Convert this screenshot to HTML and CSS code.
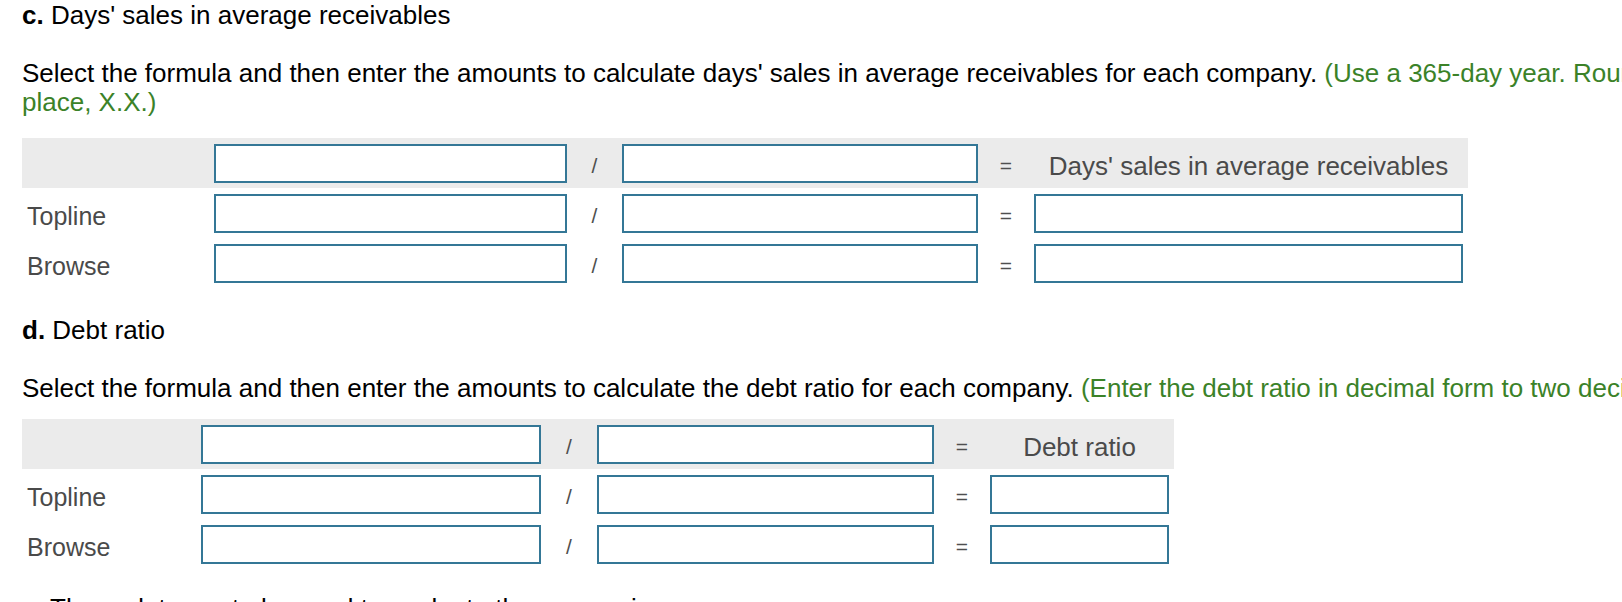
FILE: index.html
```html
<!DOCTYPE html>
<html lang="en">
<head>
<meta charset="utf-8">
<title>Ratios</title>
<link rel="stylesheet" href="styles.css">
</head>
<body>
<div class="page">
  <section class="part">
    <h3 class="part-title"><b>c.</b> Days' sales in average receivables</h3>
    <p class="prompt prompt-c">Select the formula and then enter the amounts to calculate days' sales in average receivables for each company. <span class="hint">(Use a 365-day year. Round your answers to one decimal<br>place, X.X.)</span></p>
    <div class="ratio-table t-days">
      <div class="row head">
        <span class="label"></span>
        <span class="box"></span>
        <span class="op">/</span>
        <span class="box"></span>
        <span class="op">=</span>
        <span class="result-title">Days' sales in average receivables</span>
      </div>
      <div class="row">
        <span class="label">Topline</span>
        <span class="box"></span>
        <span class="op">/</span>
        <span class="box"></span>
        <span class="op">=</span>
        <span class="box"></span>
      </div>
      <div class="row">
        <span class="label">Browse</span>
        <span class="box"></span>
        <span class="op">/</span>
        <span class="box"></span>
        <span class="op">=</span>
        <span class="box"></span>
      </div>
    </div>
  </section>

  <section class="part">
    <h3 class="part-title"><b>d.</b> Debt ratio</h3>
    <p class="prompt prompt-d">Select the formula and then enter the amounts to calculate the debt ratio for each company. <span class="hint">(Enter the debt ratio in decimal form to two decimal places, X.XX.)</span></p>
    <div class="ratio-table t-debt">
      <div class="row head">
        <span class="label"></span>
        <span class="box"></span>
        <span class="op">/</span>
        <span class="box"></span>
        <span class="op">=</span>
        <span class="result-title">Debt ratio</span>
      </div>
      <div class="row">
        <span class="label">Topline</span>
        <span class="box"></span>
        <span class="op">/</span>
        <span class="box"></span>
        <span class="op">=</span>
        <span class="box"></span>
      </div>
      <div class="row">
        <span class="label">Browse</span>
        <span class="box"></span>
        <span class="op">/</span>
        <span class="box"></span>
        <span class="op">=</span>
        <span class="box"></span>
      </div>
    </div>
  </section>

  <p class="next">These data are to be used to evaluate the companies.</p>
</div>
</body>
</html>
```

FILE: styles.css
```css
html, body {
  margin: 0;
  padding: 0;
  background: #ffffff;
  overflow: hidden;
}

body {
  font-family: "Liberation Sans", Arial, Helvetica, sans-serif;
  color: #000000;
}

.page {
  padding: 0 0 0 22px;
}

.part + .part {
  margin-top: 27px;
}

.part-title {
  margin: 0;
  font-size: 26px;
  line-height: 30px;
  font-weight: normal;
}

.part-title b {
  font-weight: bold;
}

.prompt {
  margin: 29px 0 20px;
  font-size: 26px;
  line-height: 29px;
  white-space: nowrap;
}

.prompt-c {
  margin-bottom: 21px;
}

.prompt-d {
  margin-bottom: 16px;
}

.hint {
  color: #3b8228;
}

.ratio-table {
  display: flex;
  flex-direction: column;
  width: max-content;
}

.row {
  display: grid;
  height: 50px;
  padding-right: 5px;
  align-items: start;
}

.t-days .row {
  grid-template-columns: 192px 353px 55px 356px 56px 429px;
}

.t-debt .row {
  grid-template-columns: 179px 340px 56px 337px 56px 179px;
}

.row.head {
  background: #ebebeb;
}

.label {
  padding: 7px 0 0 5px;
  font-size: 25px;
  line-height: 43px;
  color: #4a4a4a;
  white-space: nowrap;
}

.box {
  display: block;
  margin-top: 6px;
  height: 39px;
  box-sizing: border-box;
  border: 2px solid #347796;
  background: #ffffff;
}

.op {
  padding-top: 5px;
  line-height: 45px;
  font-size: 21px;
  text-align: center;
  color: #4f4f4f;
}

.result-title {
  padding-top: 6px;
  line-height: 44px;
  font-size: 26px;
  text-align: center;
  color: #4a4a4a;
  white-space: nowrap;
}

.next {
  margin: 25px 0 0 28px;
  font-size: 26px;
  line-height: 29px;
}
```
